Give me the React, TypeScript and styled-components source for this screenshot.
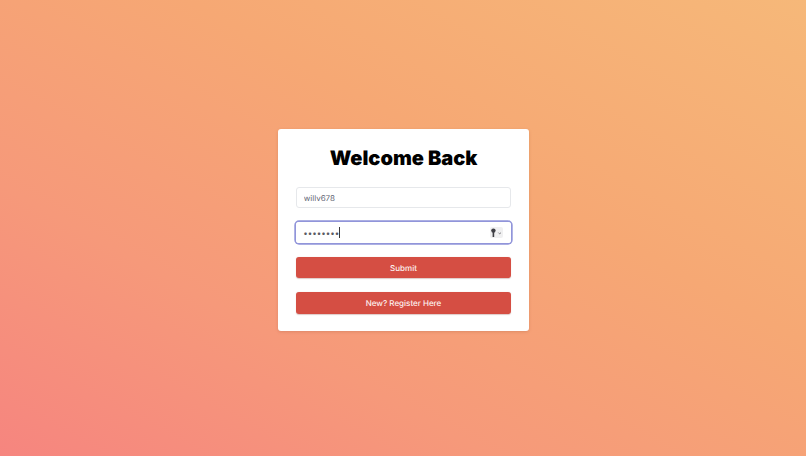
import styled, { createGlobalStyle } from "styled-components";

const GlobalStyle = createGlobalStyle`
  html, body {
    margin: 0;
    padding: 0;
    height: 100%;
  }
  #root {
    height: 100%;
  }
  * {
    box-sizing: border-box;
  }
`;

function KeyIcon() {
  return (
    <KeyBadge>
      <svg width="13" height="10" viewBox="0 0 13 10">
        <circle cx="3.4" cy="2.6" r="2.2" fill="#3f3f44" />
        <rect x="2.6" y="3.5" width="1.6" height="5.5" fill="#3f3f44" />
        <path d="M8.4 4.6l1.3 1.3 1.3-1.3" fill="none" stroke="#77777c" strokeWidth="0.9" />
      </svg>
    </KeyBadge>
  );
}

function App() {
  return (
    <Page>
      <GlobalStyle />
      <Card>
        <Title>Welcome Back</Title>
        <Form>
          <TextInput type="text" defaultValue="willv678" />
          <PasswordField>
            <PasswordInput type="password" defaultValue="12345678" />
            <Caret />
            <KeyIcon />
          </PasswordField>
          <Button type="button">Submit</Button>
          <Button type="button">New? Register Here</Button>
        </Form>
      </Card>
    </Page>
  );
}

const Page = styled.main`
  width: 100%;
  min-height: 100vh;
  padding: 4px 0 0 1px;
  display: flex;
  align-items: center;
  justify-content: center;
  background: linear-gradient(29deg, #f6857f 0%, #f6997a 30%, #f6a874 62%, #f6b879 100%);
  font-family: Inter, "Liberation Sans", sans-serif;
  text-rendering: geometricPrecision;
`;

const Card = styled.div`
  width: 251.5px;
  padding: 18px 18px 17px;
  background: #ffffff;
  border-radius: 3px;
  box-shadow: 0 1px 3px rgba(150, 80, 50, 0.25);
`;

const Title = styled.h1`
  margin: 0 0 17.2px;
  font-size: 20px;
  line-height: 23px;
  font-weight: 900;
  color: #000000;
  text-align: center;
`;

const Form = styled.form`
  display: flex;
  flex-direction: column;
  gap: 13.8px;
`;

const TextInput = styled.input`
  width: 100%;
  height: 21px;
  padding: 0 7px;
  border: 1px solid #e6e8eb;
  border-radius: 3px;
  background: #ffffff;
  font-family: inherit;
  font-size: 8px;
  color: #5f6673;
  text-rendering: geometricPrecision;
  outline: none;
`;

const PasswordField = styled.div`
  position: relative;
  display: flex;
  height: 21px;
  border-radius: 3px;
  box-shadow: 0 0 0 1.7px #9195da;
`;

const PasswordInput = styled.input`
  width: 100%;
  height: 100%;
  padding: 0 7.5px;
  border: 0;
  border-radius: 3px;
  background: #ffffff;
  font-family: inherit;
  font-size: 8px;
  color: #5a5a63;
  outline: none;
`;

const Caret = styled.span`
  position: absolute;
  left: 43px;
  top: 5px;
  width: 1px;
  height: 11px;
  background: #3a3a3a;
`;

const KeyBadge = styled.span`
  position: absolute;
  right: 8px;
  top: 5px;
  display: flex;
  align-items: center;
  justify-content: center;
  width: 13px;
  height: 11px;
  border-radius: 2px;
  background: #f0f0f1;
`;

const Button = styled.button`
  width: 100%;
  height: 21.5px;
  padding: 0;
  border: 0;
  border-radius: 3px;
  background: #d54e43;
  color: #fdf1ef;
  font-family: inherit;
  font-size: 8px;
  font-weight: 500;
  text-rendering: geometricPrecision;
  box-shadow: 0 0.5px 1px rgba(120, 40, 30, 0.25);
`;

export default App;
